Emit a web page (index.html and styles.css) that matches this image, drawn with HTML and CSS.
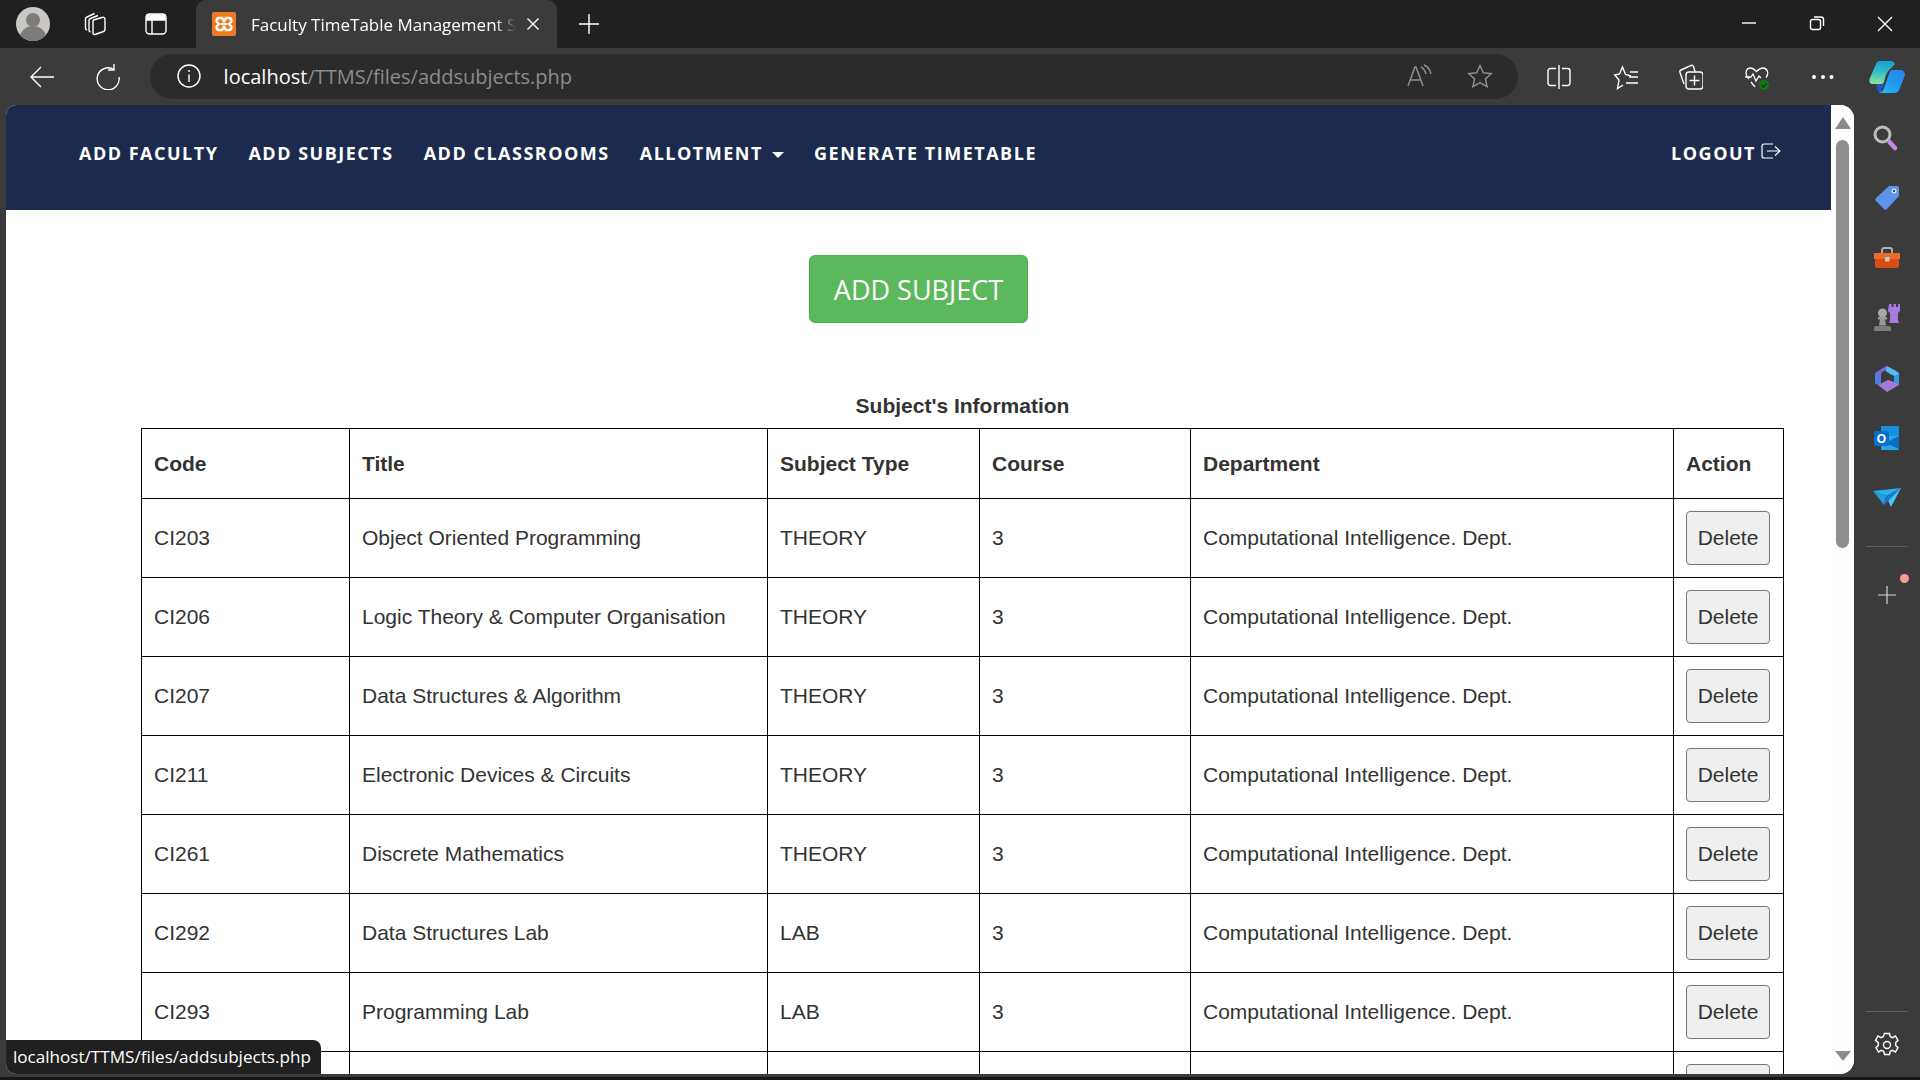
FILE: index.html
```html
<!DOCTYPE html>
<html lang="en">

<head>
    <meta charset="UTF-8">
    <title>Faculty TimeTable Management System</title>
    <link rel="stylesheet" href="styles.css">
</head>

<body>
    <!-- browser tab strip -->
    <div class="tabbar">
        <div class="strip-btn">
            <svg width="34" height="34" viewBox="0 0 34 34"><circle cx="17" cy="17" r="17" fill="#c9c8c4"/><circle cx="17" cy="13" r="7" fill="#7d7c78"/><path d="M4 28c3-7 8-9 13-9s10 2 13 9a17 17 0 0 1-26 0z" fill="#7d7c78"/></svg>
        </div>
        <div class="strip-btn">
            <svg class="line" width="26" height="26" viewBox="0 0 26 26"><path d="M13.500 9 22 6.500a2 2 0 0 1 3 2v10a2 2 0 0 1-1.500 2L15 23.500a1.500 1.500 0 0 1-2-1.500V10.500a2 2 0 0 1 .5-1.500z"/><path d="M10.500 21a2 2 0 0 1-1.500-2V9.500a2 2 0 0 1 1.500-2L18 4.500"/><path d="M7 19a2 2 0 0 1-1.500-2V8A2 2 0 0 1 7 6l7.500-3.500"/></svg>
        </div>
        <div class="strip-btn strip-btn-last">
            <svg class="line" width="24" height="24" viewBox="0 0 24 24"><rect x="2" y="2" width="20" height="20" rx="3.500"/><path d="M3 3h18v5H3z" fill="#fff"/><path d="M8 8v14"/></svg>
        </div>
        <div class="tab">
            <svg width="24" height="24" viewBox="0 0 24 24"><rect width="24" height="24" rx="2" fill="#ef7a22"/><path d="M7 6h3l2 3 2-3h3a2.500 2.500 0 0 1 2 4l-2 2 2 2a2.500 2.500 0 0 1-2 4h-3l-2-3-2 3H7a2.500 2.500 0 0 1-2-4l2-2-2-2a2.500 2.500 0 0 1 2-4z" fill="none" stroke="#fff" stroke-width="2.400"/><path d="M9 12h6" stroke="#fff" stroke-width="2"/></svg>
            <span class="tab-title">Faculty TimeTable Management System</span>
            <svg class="line" width="14" height="14" viewBox="0 0 14 14"><path d="M1.500 1.500l11 11M12.500 1.500l-11 11"/></svg>
        </div>
        <div class="new-tab">
            <svg class="line" width="20" height="20" viewBox="0 0 20 20"><path d="M10 0v20M0 10h20"/></svg>
        </div>
        <div class="window-btns">
            <div class="window-btn"><svg class="line" width="16" height="16" viewBox="0 0 16 16"><path d="M1 8h14"/></svg></div>
            <div class="window-btn"><svg class="line" width="16" height="16" viewBox="0 0 16 16"><rect x="1.500" y="4.500" width="10" height="10" rx="2"/><path d="M5 2h7a2.500 2.500 0 0 1 2.500 2.500V11"/></svg></div>
            <div class="window-btn"><svg class="line" width="18" height="18" viewBox="0 0 18 18"><path d="M2 2l14 14M16 2 2 16"/></svg></div>
        </div>
    </div>

    <!-- address bar row -->
    <div class="toolbar">
        <div class="tool-btn tool-back">
            <svg class="line" width="26" height="26" viewBox="0 0 26 26"><path d="M25 13H2M12 3 2 13l10 10"/></svg>
        </div>
        <div class="tool-btn">
            <svg class="line" width="26" height="26" viewBox="0 0 26 26"><path d="M19 5.500A11 11 0 1 0 24 13"/><path d="M19 0v6h-6"/></svg>
        </div>
        <div class="address">
            <svg class="line" width="24" height="24" viewBox="0 0 24 24"><circle cx="12" cy="12" r="11"/><path d="M12 10.500V18M12 6v2"/></svg>
            <div class="url"><span class="url-host">localhost</span>/TTMS/files/addsubjects.php</div>
            <svg class="dim-line" width="26" height="24" viewBox="0 0 26 24"><path d="M1 22 8 3h1l7 19M4 16h10"/><path d="M14 3c2 1 4 3 5 7M17 1c3 1 6 5 7 9"/></svg>
            <svg class="dim-line star-btn" width="26" height="24" viewBox="0 0 26 24"><path d="M13 1.500l3.400 7.300 7.800.8-5.800 5.300 1.700 7.800L13 18.700l-7.100 4 1.700-7.800-5.800-5.300 7.800-.8z"/></svg>
        </div>
        <div class="tool-icons">
            <div class="tool-icon"><svg class="line" width="24" height="26" viewBox="0 0 24 26"><path d="M12 1v24M9 4.500H3.500a2.500 2.500 0 0 0-2.500 2.500v12a2.500 2.500 0 0 0 2.500 2.500H9M15 4.500h5.500A2.500 2.500 0 0 1 23 7v12a2.500 2.500 0 0 1-2.500 2.500H15"/></svg></div>
            <div class="tool-icon"><svg class="line" width="26" height="26" viewBox="-2 0 26 26"><path d="M17 12 11.500 10.500 8.500 3l-3 7-4.800 1L5 16 3.500 24.500 9 21"/><path d="M16 8h8M15 13h9M12 19h12"/></svg></div>
            <div class="tool-icon"><svg class="line" width="26" height="26" viewBox="-1 0 26 26"><path d="M6 20 2 8.500a2 2 0 0 1 1-2.500l10-4.500a2 2 0 0 1 2.500 1L17 7.500"/><rect x="8" y="8" width="17" height="17" rx="3"/><path d="M16.500 11.500v10M11.500 16.500h10"/></svg></div>
            <div class="tool-icon"><svg width="26" height="26" viewBox="-1 0 26 26"><path class="health" d="M5 15C0 10 2 4 6.500 4c3 0 4.500 2 6 3.500C14 6 16 4 19 4c4 0 6.500 5 3 9.500M1 13h6l2-3 3 7 3-5 2 2M7 18l4 5"/><circle cx="20" cy="21" r="5" fill="#107c10"/><path d="M17.500 21l2 2 3-3.500" stroke="#1d2a1d" stroke-width="1.300" fill="none"/></svg></div>
            <div class="tool-icon"><svg width="24" height="6" viewBox="-1 0 24 6"><circle cx="3" cy="3" r="2" fill="#fff"/><circle cx="12" cy="3" r="2" fill="#fff"/><circle cx="20.500" cy="3" r="2" fill="#fff"/></svg></div>
            <div class="tool-icon">
                <svg width="36" height="32" viewBox="0 0 36 32">
                    <defs>
                        <linearGradient id="copA" x1="0.400" y1="0" x2="0.300" y2="1"><stop offset="0" stop-color="#1a9fd8"/><stop offset="0.500" stop-color="#35c0c0"/><stop offset="1" stop-color="#8be3a3"/></linearGradient>
                        <linearGradient id="copB" x1="0.800" y1="0" x2="0.300" y2="1"><stop offset="0" stop-color="#2a84e8"/><stop offset="0.600" stop-color="#1f9af0"/><stop offset="1" stop-color="#1bb8f5"/></linearGradient>
                    </defs>
                    <path d="M8 23h7l-4 9c-2-1-4-5-3-9z" fill="#2455d0"/>
                    <path d="M23 9h8c3 0 5 2 5 5l-5 13c-1 3-3 5-6 5H14c-2 0-3-.5-4-1 3 0 4-1 5-4l5-14c.5-2 1.500-4 3-4z" fill="url(#copB)"/>
                    <path d="M11 0h11c2 0 3 1 4 3l-6 6c-2 2-3 5-4 8l-1 4c-.5 1.500-2 2-3 2H4c-3 0-4-2-3.500-5L7 3c.5-2 2-3 4-3z" fill="url(#copA)"/>
                </svg>
            </div>
        </div>
    </div>

    <div class="workspace">
        <div class="page">
            <div class="page-content">
                <nav class="navbar">
                    <ul class="nav-links">
                        <li>ADD FACULTY</li>
                        <li>ADD SUBJECTS</li>
                        <li>ADD CLASSROOMS</li>
                        <li>ALLOTMENT <span class="caret"></span></li>
                        <li>GENERATE TIMETABLE</li>
                    </ul>
                    <div class="logout">LOGOUT
                        <svg width="20" height="16" viewBox="0 0 20 16"><path d="M12 1H3a2 2 0 0 0-2 2v10a2 2 0 0 0 2 2h9M6 8h13M14 3.500 19 8l-5 4.500" fill="none" stroke="#fff" stroke-width="1.200"/></svg>
                    </div>
                </nav>

                <div class="add-row">
                    <button class="add-btn">ADD SUBJECT</button>
                </div>

                <table class="subjects">
                    <caption>Subject's Information</caption>
                    <colgroup>
                        <col class="c-code">
                        <col class="c-title">
                        <col class="c-type">
                        <col class="c-course">
                        <col class="c-dept">
                        <col class="c-action">
                    </colgroup>
                    <thead>
                        <tr>
                            <th>Code</th>
                            <th>Title</th>
                            <th>Subject Type</th>
                            <th>Course</th>
                            <th>Department</th>
                            <th>Action</th>
                        </tr>
                    </thead>
                    <tbody>
                        <tr>
                            <td>CI203</td>
                            <td>Object Oriented Programming</td>
                            <td>THEORY</td>
                            <td>3</td>
                            <td>Computational Intelligence. Dept.</td>
                            <td><button class="del-btn">Delete</button></td>
                        </tr>
                        <tr>
                            <td>CI206</td>
                            <td>Logic Theory &amp; Computer Organisation</td>
                            <td>THEORY</td>
                            <td>3</td>
                            <td>Computational Intelligence. Dept.</td>
                            <td><button class="del-btn">Delete</button></td>
                        </tr>
                        <tr>
                            <td>CI207</td>
                            <td>Data Structures &amp; Algorithm</td>
                            <td>THEORY</td>
                            <td>3</td>
                            <td>Computational Intelligence. Dept.</td>
                            <td><button class="del-btn">Delete</button></td>
                        </tr>
                        <tr>
                            <td>CI211</td>
                            <td>Electronic Devices &amp; Circuits</td>
                            <td>THEORY</td>
                            <td>3</td>
                            <td>Computational Intelligence. Dept.</td>
                            <td><button class="del-btn">Delete</button></td>
                        </tr>
                        <tr>
                            <td>CI261</td>
                            <td>Discrete Mathematics</td>
                            <td>THEORY</td>
                            <td>3</td>
                            <td>Computational Intelligence. Dept.</td>
                            <td><button class="del-btn">Delete</button></td>
                        </tr>
                        <tr>
                            <td>CI292</td>
                            <td>Data Structures Lab</td>
                            <td>LAB</td>
                            <td>3</td>
                            <td>Computational Intelligence. Dept.</td>
                            <td><button class="del-btn">Delete</button></td>
                        </tr>
                        <tr>
                            <td>CI293</td>
                            <td>Programming Lab</td>
                            <td>LAB</td>
                            <td>3</td>
                            <td>Computational Intelligence. Dept.</td>
                            <td><button class="del-btn">Delete</button></td>
                        </tr>
                    </tbody>
                </table>
                <div class="next-row"><span class="next-btn"></span></div>
            </div>

            <div class="scrollbar">
                <div class="arrow-up"></div>
                <div class="thumb"></div>
                <div class="arrow-down"></div>
            </div>

            <div class="status">localhost/TTMS/files/addsubjects.php</div>
        </div>

        <!-- edge sidebar -->
        <aside class="sidebar">
            <div class="side-icon"><svg width="32" height="32" viewBox="0 0 32 32"><circle cx="11.500" cy="13.500" r="7.500" fill="none" stroke="#bdbdbd" stroke-width="3"/><path d="M18.500 21l5.500 6" stroke="#c48be6" stroke-width="4.500" stroke-linecap="round"/></svg></div>
            <div class="side-icon"><svg width="32" height="32" viewBox="0 -1 32 32"><path d="M18 4h8a2 2 0 0 1 2 2v8L16 27a2 2 0 0 1-3 0l-8-8a2 2 0 0 1 0-3z" fill="#5d94ea"/><circle cx="23" cy="9" r="2.500" fill="#dfe9fb"/><circle cx="23" cy="9" r="1.200" fill="#33466b"/></svg></div>
            <div class="side-icon"><svg width="32" height="32" viewBox="0 -2 32 32"><path d="M11 11V7a2 2 0 0 1 2-2h6a2 2 0 0 1 2 2v4" fill="none" stroke="#b5b5b5" stroke-width="1.800"/><path d="M3 10h26v6H3z" fill="#ee6a2a"/><path d="M4 16h24v7a2 2 0 0 1-2 2H6a2 2 0 0 1-2-2z" fill="#d94c12"/><rect x="14" y="14" width="4.500" height="4.500" fill="#c9c9c9"/></svg></div>
            <div class="side-icon"><svg width="32" height="32" viewBox="0 0 32 32"><path d="M18 3h2.500v3h2V3h2.500v3h2V3H29v7l-2 2v7l1 3H18l1-3v-7l-2-2z" fill="#a97bdc"/><circle cx="11.500" cy="12" r="4.500" fill="#a8a8a8"/><path d="M7 16h9v2.500h-2l1 6H8l1-6H7z" fill="#9a9a9a"/><path d="M5 25h13a2 2 0 0 1 2 2v3H3v-3a2 2 0 0 1 2-2z" fill="#7c7c7c"/></svg></div>
            <div class="side-icon">
                <svg width="32" height="32" viewBox="0 -2 32 32">
                    <path d="M15 3 26 8l-5 3-6-3c-2-1-5 1-5 4v8l-3 2-3-2V10z" fill="#7a6ad8"/>
                    <path d="M16 3l12 7v5l-9-4-4-3z" fill="#4fc0ef"/>
                    <path d="M28 11v11l-3 1-2-1V13z" fill="#2f9be0"/>
                    <path d="M7 22l10-5 6 2 5 3-12 7z" fill="#a877d8"/>
                    <path d="M4 10l6 3v8l-3 1-3-2z" fill="#4a7de0"/>
                </svg>
            </div>
            <div class="side-icon">
                <svg width="32" height="32" viewBox="0 -1 32 32">
                    <rect x="10" y="4" width="18" height="12" fill="#1490df"/>
                    <path d="M10 14h18v13a1 1 0 0 1-1 1H11a1 1 0 0 1-1-1z" fill="#28a8ea"/>
                    <path d="M14 21l14-7v13z" fill="#0a6ebf"/>
                    <rect x="3" y="9" width="15" height="15" rx="1.500" fill="#0a70c6"/>
                    <text x="10.500" y="21" class="side-o">O</text>
                </svg>
            </div>
            <div class="side-icon"><svg width="32" height="32" viewBox="0 -1 32 32"><path d="M2 9l28-3-15 8z" fill="#2bb2ee"/><path d="M30 6 15 14l5 11z" fill="#47c7f5"/><path d="M30 6 15 14l-2 9z" fill="#1a79c9"/><path d="M2 9l11 14 2-9z" fill="#1fa0e0"/></svg></div>
            <div class="side-divider"></div>
            <div class="side-add">
                <svg class="thin" width="18" height="18" viewBox="0 0 18 18"><path d="M9 0v18M0 9h18"/></svg>
                <span class="side-dot"></span>
            </div>
            <div class="side-bottom">
                <div class="side-divider"></div>
                <svg class="line gear" width="26" height="26" viewBox="0 0 26 26"><circle cx="13" cy="13" r="3.500"/><path d="M10.500 1.500h5l.8 3.200 2.400 1 2.800-1.700 2.500 4.300-2.300 2.300v2.800l2.300 2.300-2.500 4.300-2.800-1.700-2.400 1-.8 3.200h-5l-.8-3.200-2.400-1-2.800 1.700-2.500-4.300 2.300-2.300v-2.800L1.500 8.300 4 4l2.800 1.700 2.400-1z"/></svg>
            </div>
        </aside>
    </div>
    <div class="bottom-edge"></div>
</body>

</html>
```
FILE: styles.css
```css
html,
body {
    margin: 0;
    height: 1080px;
    overflow: hidden;
}

body {
    background: #3b3b3b;
    font-family: "Open Sans", sans-serif;
    color: #fff;
}

svg {
    display: block;
    flex: none;
}

.line {
    fill: none;
    stroke: #fff;
    stroke-width: 1.4;
}

.dim-line {
    fill: none;
    stroke: #8f8f8f;
    stroke-width: 1.5;
}

.thin {
    fill: none;
    stroke: #d8d8d8;
    stroke-width: 1.2;
}

.health {
    fill: none;
    stroke: #fff;
    stroke-width: 1.3;
}

/* tab strip */
.tabbar {
    height: 48px;
    background: #202020;
    display: flex;
    align-items: center;
    padding-left: 3px;
    padding-right: 1px;
}

.strip-btn {
    width: 60px;
    display: flex;
    justify-content: center;
}

.strip-btn-last {
    margin-left: 3px;
}

.tab {
    width: 361px;
    height: 48px;
    margin-left: 10px;
    box-sizing: border-box;
    padding: 0 17px 0 16px;
    background: #3b3b3b;
    border-radius: 10px 10px 0 0;
    display: flex;
    align-items: center;
}

.tab-title {
    flex: 1;
    margin-left: 15px;
    margin-right: 10px;
    font-size: 17px;
    white-space: nowrap;
    overflow: hidden;
    -webkit-mask-image: linear-gradient(to right, #000 92%, transparent);
    mask-image: linear-gradient(to right, #000 92%, transparent);
}

.new-tab {
    margin-left: 22px;
}

.window-btns {
    margin-left: auto;
    display: flex;
}

.window-btn {
    width: 68px;
    display: flex;
    justify-content: center;
}

/* address bar row */
.toolbar {
    height: 57px;
    display: flex;
    align-items: center;
    padding-left: 9px;
}

.tool-btn {
    width: 66px;
    display: flex;
    justify-content: center;
}

.address {
    width: 1373px;
    height: 45px;
    margin-left: 9px;
    margin-bottom: 1px;
    box-sizing: border-box;
    padding: 0 25px 0 27px;
    background: #2b2b2b;
    border-radius: 23px;
    display: flex;
    align-items: center;
}

.url {
    flex: 1;
    margin-left: 23px;
    font-size: 20px;
    color: #8c8c8c;
}

.url-host {
    color: #fff;
}

.star-btn {
    margin-left: 34px;
}

.tool-icons {
    display: flex;
    align-items: center;
    margin-left: 8px;
}

.tool-icon {
    width: 65.6px;
    display: flex;
    justify-content: center;
}

/* page area */
.workspace {
    height: 969px;
    display: flex;
}

.page {
    width: 1848px;
    margin-left: 6px;
    position: relative;
    display: flex;
    background: #fff;
    border-radius: 10px 14px 14px 10px;
    overflow: hidden;
}

.page-content {
    width: 1825px;
    overflow: hidden;
    color: #333;
}

.navbar {
    height: 105px;
    box-sizing: border-box;
    padding: 36px 50px 0 73px;
    background: #1c2b4d;
    color: #fff;
    display: flex;
    justify-content: space-between;
    font-size: 18px;
    font-weight: 700;
    letter-spacing: 1.5px;
}

.nav-links {
    list-style: none;
    margin: 0;
    padding: 0;
    display: flex;
    gap: 30px;
}

.caret {
    display: inline-block;
    width: 0;
    height: 0;
    margin-left: 3px;
    vertical-align: 2px;
    border-top: 6px solid #fff;
    border-left: 6px solid transparent;
    border-right: 6px solid transparent;
}

.logout {
    display: flex;
    gap: 5px;
    align-items: flex-start;
}

.logout svg {
    margin-top: 2px;
}

.add-row {
    display: flex;
    justify-content: center;
    margin-top: 45px;
}

.add-btn {
    width: 219px;
    height: 68px;
    padding: 0;
    background: #5cb85c;
    border: 1px solid #4cae4c;
    border-radius: 6px;
    color: #fff;
    font-family: "Open Sans", sans-serif;
    font-size: 27px;
}

.subjects {
    width: 1643px;
    margin: 68px 0 0 135px;
    table-layout: fixed;
    border-collapse: collapse;
    font-family: "Liberation Sans", Arial, sans-serif;
    font-size: 21px;
}

.subjects caption {
    height: 37px;
    line-height: 30px;
    font-weight: 700;
    color: #333;
}

.c-code {
    width: 208px;
}

.c-title {
    width: 418px;
}

.c-type {
    width: 212px;
}

.c-course {
    width: 211px;
}

.c-dept {
    width: 483px;
}

.c-action {
    width: 110px;
}

.subjects th,
.subjects td {
    border: 1px solid #000;
    padding: 12px;
    text-align: left;
}

.subjects th {
    height: 45px;
    font-weight: 700;
}

.subjects td {
    height: 54px;
}

.del-btn {
    display: block;
    width: 84px;
    height: 54px;
    padding: 0;
    background: #efefef;
    border: 1px solid #767676;
    border-radius: 4px;
    color: #333;
    font-family: "Liberation Sans", Arial, sans-serif;
    font-size: 21px;
}

/* the next table row, only its top shows above the fold */
.next-row {
    width: 1643px;
    height: 30px;
    margin-left: 135px;
    box-sizing: border-box;
    border-left: 1px solid #000;
    border-right: 1px solid #000;
    display: flex;
    justify-content: flex-end;
    padding: 12px 13px 0 0;
    background: linear-gradient(#000, #000) 207px 0 / 1px 100% no-repeat,
        linear-gradient(#000, #000) 625px 0 / 1px 100% no-repeat,
        linear-gradient(#000, #000) 837px 0 / 1px 100% no-repeat,
        linear-gradient(#000, #000) 1048px 0 / 1px 100% no-repeat,
        linear-gradient(#000, #000) 1531px 0 / 1px 100% no-repeat;
}

.next-btn {
    width: 84px;
    height: 54px;
    box-sizing: border-box;
    background: #efefef;
    border: 1px solid #767676;
    border-radius: 4px;
    flex: none;
}

.scrollbar {
    width: 23px;
    box-sizing: border-box;
    padding: 12px 0 13px;
    background: #fdfdfd;
    display: flex;
    flex-direction: column;
    align-items: center;
}

.arrow-up {
    width: 0;
    height: 0;
    border-bottom: 12px solid #8c8c8c;
    border-left: 8px solid transparent;
    border-right: 8px solid transparent;
}

.thumb {
    width: 13px;
    height: 408px;
    margin-top: 11px;
    background: #8f8f8f;
    border-radius: 7px;
}

.arrow-down {
    width: 0;
    height: 0;
    margin-top: auto;
    border-top: 10px solid #8c8c8c;
    border-left: 8px solid transparent;
    border-right: 8px solid transparent;
}

.status {
    position: absolute;
    left: 0;
    bottom: 0;
    width: 315px;
    height: 34px;
    box-sizing: border-box;
    padding-left: 7px;
    background: #202020;
    border-radius: 0 8px 0 8px;
    color: #fff;
    font-size: 17.1px;
    line-height: 33px;
    white-space: nowrap;
}

/* edge sidebar */
.sidebar {
    width: 66px;
    display: flex;
    flex-direction: column;
    align-items: center;
    padding-top: 2px;
    box-sizing: border-box;
}

.side-icon {
    height: 60px;
    display: flex;
    align-items: center;
}

.side-o {
    font-family: "Liberation Sans", Arial, sans-serif;
    font-size: 12px;
    font-weight: 700;
    fill: #fff;
    text-anchor: middle;
}

.side-divider {
    width: 42px;
    height: 1px;
    margin-top: 19px;
    background: #5e5e5e;
}

.side-add {
    position: relative;
    margin-top: 39px;
}

.side-dot {
    position: absolute;
    left: 22px;
    top: -12px;
    width: 9px;
    height: 9px;
    border-radius: 50%;
    background: #f79a94;
}

.side-bottom {
    margin-top: auto;
    padding-bottom: 16px;
    display: flex;
    flex-direction: column;
    align-items: center;
}

.gear {
    margin-top: 20px;
}

.bottom-edge {
    height: 6px;
    box-sizing: border-box;
    border-bottom: 3px solid #161616;
}
```
